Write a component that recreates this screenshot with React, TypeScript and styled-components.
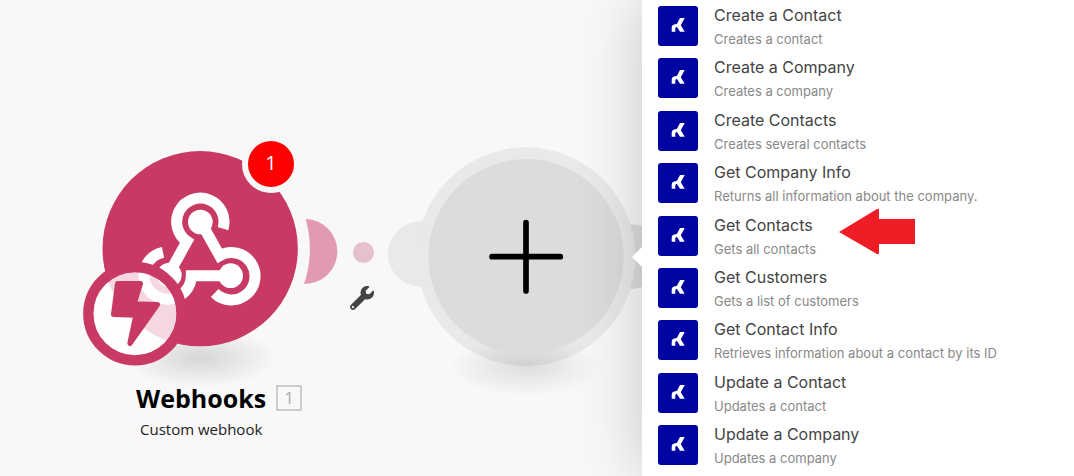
import React from 'react';
import styled, { createGlobalStyle } from 'styled-components';

const GlobalStyle = createGlobalStyle`
  * { box-sizing: border-box; }
  body { margin: 0; background: #f8f8f8; font-family: Inter, 'Liberation Sans', sans-serif; }
  button { border: 0; padding: 0; background: none; font: inherit; color: inherit; cursor: pointer; }
`;

const Page = styled.main`
  display: flex;
  min-height: 100vh;
  overflow: hidden;
`;

const Canvas = styled.section`
  position: relative;
  flex: 1;
  min-width: 0;
  background: #f8f8f8;
  font-family: 'Open Sans', 'Noto Sans', sans-serif;
`;

const Placed = styled.div<{ $x: number; $y: number }>`
  position: absolute;
  left: ${(p) => p.$x}px;
  top: ${(p) => p.$y}px;
`;

const NodeButton = styled.button`
  display: block;
  svg { display: block; }
`;

const Badge = styled.span`
  position: absolute;
  left: 172px;
  top: 5px;
  width: 58px;
  height: 58px;
  border: 6px solid #f8f8f8;
  border-radius: 50%;
  background: #ff0000;
  color: #fff;
  font-size: 20px;
  font-weight: 500;
  line-height: 44px;
  text-align: center;
`;

const Caption = styled.div`
  display: flex;
  flex-direction: column;
  align-items: flex-start;
`;

const NameRow = styled.div`
  display: flex;
  align-items: center;
  gap: 10px;
`;

const NodeName = styled.h2`
  margin: 0;
  font-size: 25px;
  line-height: 32px;
  font-weight: 700;
  color: #000;
`;

const NodeId = styled.span`
  width: 26px;
  height: 26px;
  border: 2px solid #ccc;
  color: #aaa;
  font-size: 17px;
  line-height: 22px;
  text-align: center;
`;

const NodeType = styled.p`
  margin: 4px 0 0 4px;
  font-size: 15px;
  line-height: 22px;
  color: #222;
  white-space: nowrap;
`;

const Panel = styled.aside`
  position: relative;
  flex: 0 0 432px;
  background: #fff;
  box-shadow: 0 0 60px rgba(0, 0, 0, 0.2);
  &::before {
    content: '';
    position: absolute;
    left: -10px;
    top: 247px;
    border: solid transparent;
    border-width: 10px 10px 10px 0;
    border-right-color: #fff;
  }
`;

const ActionList = styled.ul`
  display: flex;
  flex-direction: column;
  justify-content: space-between;
  min-height: 100vh;
  margin: 0;
  padding: 2px 16px 7px;
  list-style: none;
`;

const ActionItem = styled.li`
  position: relative;
`;

const Action = styled.button`
  display: flex;
  align-items: center;
  gap: 16px;
  width: 100%;
  height: 48px;
  text-align: left;
`;

const AppIcon = styled.span`
  display: block;
  width: 40px;
  height: 40px;
  border-radius: 3px;
  background: #0005a2;
  svg { display: block; }
`;

const ActionText = styled.span`
  display: flex;
  flex-direction: column;
`;

const ActionTitle = styled.span`
  font-size: 16px;
  line-height: 26px;
  font-weight: 400;
  color: #444;
`;

const ActionNote = styled.span`
  font-size: 13px;
  line-height: 22px;
  color: #888;
`;

const Pointer = styled.svg`
  position: absolute;
  left: 181px;
  top: -3px;
`;

const actions = [
  { title: 'Create a Contact', note: 'Creates a contact' },
  { title: 'Create a Company', note: 'Creates a company' },
  { title: 'Create Contacts', note: 'Creates several contacts' },
  { title: 'Get Company Info', note: 'Returns all information about the company.' },
  { title: 'Get Contacts', note: 'Gets all contacts', marked: true },
  { title: 'Get Customers', note: 'Gets a list of customers' },
  { title: 'Get Contact Info', note: 'Retrieves information about a contact by its ID' },
  { title: 'Update a Contact', note: 'Updates a contact' },
  { title: 'Update a Company', note: 'Updates a company' },
];

const WebhookDrawing = () => (
  <svg width="280" height="270" viewBox="0 0 840 810" aria-hidden="true">
    <defs>
      <radialGradient id="hookShadow">
        <stop offset="0" stopColor="#d6d6d6" />
        <stop offset="1" stopColor="#f8f8f8" />
      </radialGradient>
    </defs>
    <ellipse cx="390" cy="684" rx="232" ry="88" fill="url(#hookShadow)" />
    <circle cx="390.500" cy="356" r="293" fill="#c83a63" />
    <path d="M707 267 A97.500 97.500 0 1 1 702 462 A330 330 0 0 0 707 267Z" fill="#e29ab0" />
    <g fill="none" stroke="#fff" strokeWidth="33">
      <path d="M459 296 A71 71 0 1 0 351 334 L306 415" />
      <path d="M404 297 L449 377 A71 71 0 1 1 434 489" />
      <path d="M279 367 A71 71 0 1 0 364 437 L482 437" />
    </g>
    <g fill="#fff">
      <circle cx="391" cy="276" r="37" />
      <circle cx="298" cy="435" r="37" />
      <circle cx="482" cy="437" r="37" />
    </g>
    <circle cx="195" cy="551" r="125" fill="#fff" fillOpacity="0.8" />
    <circle cx="195" cy="551" r="140" fill="none" stroke="#c83a63" strokeWidth="31" />
    <path
      d="M143 461 L211 461 L192 522 L262 524 L180 640 L198 555 L131 553Z"
      fill="#c83a63" stroke="#c83a63" strokeWidth="16" strokeLinejoin="round"
    />
  </svg>
);

const AddDrawing = () => (
  <svg width="280" height="270" viewBox="0 0 840 810" aria-hidden="true">
    <defs>
      <radialGradient id="addShadow">
        <stop offset="0" stopColor="#000" stopOpacity="0.11" />
        <stop offset="1" stopColor="#000" stopOpacity="0" />
      </radialGradient>
    </defs>
    <circle cx="122" cy="372" r="98" fill="#e9e9e9" />
    <circle cx="755" cy="380" r="97" fill="#dcdcdc" />
    <circle cx="438" cy="380" r="328" fill="#e9e9e9" />
    <ellipse cx="438" cy="710" rx="232" ry="88" fill="url(#addShadow)" />
    <circle cx="438" cy="380" r="293" fill="#dcdcdc" />
    <path d="M336 380 H541 M438 278 V483" stroke="#000" strokeWidth="17" strokeLinecap="round" />
  </svg>
);

const Wrench = () => (
  <svg width="24" height="24" viewBox="0 0 512 512" aria-hidden="true">
    <path
      fill="#444"
      d="M507.730 109.100c-2.240-9.030-13.540-12.090-20.120-5.510l-74.360 74.360-67.880-11.310-11.310-67.880 74.360-74.360c6.620-6.620 3.430-17.900-5.660-20.160-47.380-11.740-99.550.910-136.580 37.930-39.640 39.640-50.550 97.100-34.050 147.200L18.740 402.760c-24.990 24.990-24.990 65.510 0 90.500 24.990 24.990 65.510 24.990 90.500 0l213.210-213.210c50.120 16.710 107.470 5.680 147.370-34.220 37.070-37.070 49.700-89.320 37.910-136.730zM64 472c-13.250 0-24-10.750-24-24 0-13.260 10.750-24 24-24s24 10.740 24 24c0 13.250-10.750 24-24 24z"
    />
  </svg>
);

const Dot = styled.span`
  display: block;
  width: 21px;
  height: 21px;
  border-radius: 50%;
  background: #e5c0cd;
`;

export default function App() {
  return (
    <>
      <GlobalStyle />
      <Page>
        <Canvas>
          <Placed $x={70} $y={130}>
            <NodeButton aria-label="Webhooks module">
              <WebhookDrawing />
              <Badge>1</Badge>
            </NodeButton>
          </Placed>
          <Placed $x={353} $y={242}>
            <Dot />
          </Placed>
          <Placed $x={350} $y={286}>
            <NodeButton aria-label="Link settings">
              <Wrench />
            </NodeButton>
          </Placed>
          <Placed $x={380} $y={130}>
            <NodeButton aria-label="Add another module">
              <AddDrawing />
            </NodeButton>
          </Placed>
          <Placed $x={136} $y={382}>
            <Caption>
              <NameRow>
                <NodeName>Webhooks</NodeName>
                <NodeId>1</NodeId>
              </NameRow>
              <NodeType>Custom webhook</NodeType>
            </Caption>
          </Placed>
        </Canvas>
        <Panel>
          <ActionList>
            {actions.map((a) => (
              <ActionItem key={a.title}>
                <Action>
                  <AppIcon>
                    <svg width="40" height="40" viewBox="0 0 40 40" aria-hidden="true">
                      <path
                        d="M26.700 12 H22 L19 17.800 L15.500 18.800 Q13.700 19.500 13.700 21.500 V25.700 H17.300 V22.500 Q17.300 21.200 18.800 20.800 L22 25.700 H26.700 L22.800 19.300Z"
                        fill="#fff"
                      />
                    </svg>
                  </AppIcon>
                  <ActionText>
                    <ActionTitle>{a.title}</ActionTitle>
                    <ActionNote>{a.note}</ActionNote>
                  </ActionText>
                </Action>
                {a.marked && (
                  <Pointer width="77" height="46" viewBox="0 0 77 46" aria-hidden="true">
                    <path d="M0 23 L38 0 H40 V10 H76 V35 H40 V45 H38Z" fill="#ee1c25" />
                  </Pointer>
                )}
              </ActionItem>
            ))}
          </ActionList>
        </Panel>
      </Page>
    </>
  );
}
